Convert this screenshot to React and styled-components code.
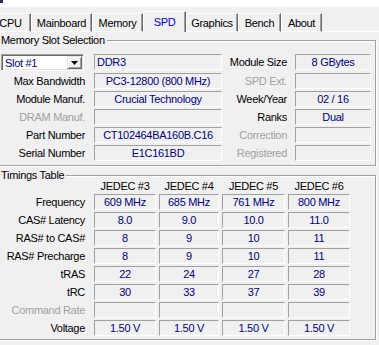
import React from 'react';
import styled, { createGlobalStyle } from 'styled-components';

const GlobalStyle = createGlobalStyle`
  html, body { margin: 0; padding: 0; background: #f0f0f0; }
  body { font-family: "Liberation Sans", Arial, sans-serif; }
`;

const Window = styled.div`
  width: 379px;
  height: 345px;
  overflow: hidden;
  background: #f0f0f0;
  font-family: "Liberation Sans", Arial, sans-serif;
  font-size: 11px;
  letter-spacing: -0.3px;
  color: #000;
  display: flex;
  flex-direction: column;
`;

const TitleEdge = styled.div`
  height: 7px;
  flex-shrink: 0;
  background: #fff;
  display: flex;
`;

const TitleMark = styled.span`
  width: 3px;
  height: 3px;
  background: #3b1f5e;
`;

const TabBar = styled.div`
  display: flex;
  align-items: flex-end;
  height: 25px;
  flex-shrink: 0;
  margin-left: -10px;
`;

const Tab = styled.div`
  box-sizing: border-box;
  flex-shrink: 0;
  width: ${(p) => p.$w}px;
  height: ${(p) => (p.$active ? 21 : 19)}px;
  display: flex;
  align-items: center;
  justify-content: center;
  border-top: 1px solid #fff;
  border-left: 1px solid #fff;
  border-right: 1px solid #696969;
  border-bottom: ${(p) => (p.$active ? 'none' : '1px solid #fff')};
  box-shadow: inset -1px 0 0 #a0a0a0;
  color: ${(p) => (p.$active ? '#0000ff' : '#000')};
  white-space: nowrap;
`;

const TabFiller = styled.div`
  flex: 1;
  height: 1px;
  background: #fff;
`;

const Panel = styled.div`
  display: flex;
  flex-direction: column;
  margin-left: -6px;
  width: 382px;
`;

const GroupBox = styled.fieldset`
  box-sizing: border-box;
  width: 382px;
  min-width: 0;
  margin: ${(p) => p.$mt}px 0 0 0;
  padding: ${(p) => p.$pt}px 3px ${(p) => p.$pb}px 6px;
  border: 1px solid #a0a0a0;
  box-shadow: inset 1px 1px 0 #fff, 1px 1px 0 #fff;
`;

const Legend = styled.legend`
  padding: 0 2px;
  margin-left: -2px;
  line-height: 13px;
  background: #f0f0f0;
  white-space: nowrap;
`;

const SlotGrid = styled.div`
  display: grid;
  grid-template-columns: 93px 128px 73px 76px;
  grid-template-rows: 19px repeat(5, 18px);
`;

const TimingGrid = styled.div`
  display: grid;
  margin-top: -3px;
  grid-template-columns: 90px 62px 60px 63px 62px;
  grid-template-rows: 14px repeat(8, 18px);
  column-gap: 3px;
`;

const Label = styled.div`
  text-align: right;
  padding-right: ${(p) => p.$pr}px;
  line-height: ${(p) => p.$lh || 18}px;
  color: ${(p) => (p.$disabled ? '#a0a0a0' : '#000')};
  white-space: nowrap;
`;

const Header = styled.div`
  text-align: center;
  line-height: 14px;
  white-space: nowrap;
`;

const Field = styled.div`
  box-sizing: border-box;
  height: 16px;
  margin-top: 1px;
  border-top: 1px solid #a0a0a0;
  border-left: 1px solid #a0a0a0;
  border-bottom: 1px solid #fff;
  border-right: 1px solid #fff;
  line-height: 14px;
  color: #000080;
  text-align: ${(p) => (p.$left ? 'left' : 'center')};
  padding-left: ${(p) => (p.$left ? 2 : 0)}px;
  white-space: nowrap;
  overflow: hidden;
`;

const Combo = styled.div`
  box-sizing: border-box;
  width: 83px;
  height: 17px;
  margin-top: 1px;
  display: flex;
  background: #fff;
  border: 1px solid;
  border-color: #a0a0a0 #fff #fff #a0a0a0;
  box-shadow: inset 1px 1px 0 #696969, inset -1px -1px 0 #e3e3e3;
`;

const ComboText = styled.span`
  flex: 1;
  padding-left: 3px;
  padding-top: 1px;
  line-height: 14px;
  color: #000080;
  white-space: nowrap;
`;

const ComboButton = styled.span`
  box-sizing: border-box;
  width: 15px;
  margin: 1px 1px 1px 0;
  display: flex;
  align-items: center;
  justify-content: center;
  background: #f0f0f0;
  border: 1px solid;
  border-color: #e3e3e3 #696969 #696969 #e3e3e3;
  box-shadow: inset 1px 1px 0 #fff, inset -1px -1px 0 #a0a0a0;
`;

const tabs = [
  { name: 'CPU', w: 41 },
  { name: 'Mainboard', w: 61 },
  { name: 'Memory', w: 51 },
  { name: 'SPD', w: 43, active: true },
  { name: 'Graphics', w: 52 },
  { name: 'Bench', w: 43 },
  { name: 'About', w: 41 },
];

const slotRows = [
  { l: 'Max Bandwidth', v: 'PC3-12800 (800 MHz)', rl: 'SPD Ext.', rd: true, rv: '' },
  { l: 'Module Manuf.', v: 'Crucial Technology', rl: 'Week/Year', rv: '02 / 16' },
  { l: 'DRAM Manuf.', d: true, v: '', rl: 'Ranks', rv: 'Dual' },
  { l: 'Part Number', v: 'CT102464BA160B.C16', rl: 'Correction', rd: true, rv: '' },
  { l: 'Serial Number', v: 'E1C161BD', rl: 'Registered', rd: true, rv: '' },
];

const timingRows = [
  { l: 'Frequency', v: ['609 MHz', '685 MHz', '761 MHz', '800 MHz'] },
  { l: 'CAS# Latency', v: ['8.0', '9.0', '10.0', '11.0'] },
  { l: 'RAS# to CAS#', v: ['8', '9', '10', '11'] },
  { l: 'RAS# Precharge', v: ['8', '9', '10', '11'] },
  { l: 'tRAS', v: ['22', '24', '27', '28'] },
  { l: 'tRC', v: ['30', '33', '37', '39'] },
  { l: 'Command Rate', d: true, v: ['', '', '', ''] },
  { l: 'Voltage', v: ['1.50 V', '1.50 V', '1.50 V', '1.50 V'] },
];

const Arrow = () => (
  <svg width="7" height="4" viewBox="0 0 7 4">
    <path d="M0 0H7L3.5 4Z" fill="#000" />
  </svg>
);

export default function App() {
  return (
    <>
      <GlobalStyle />
      <Window>
        <TitleEdge>
          <TitleMark />
        </TitleEdge>
        <TabBar>
          {tabs.map((t) => (
            <Tab key={t.name} $w={t.w} $active={t.active}>
              {t.name}
            </Tab>
          ))}
          <TabFiller />
        </TabBar>
        <Panel>
          <GroupBox $mt={2} $pt={6} $pb={3}>
            <Legend>Memory Slot Selection</Legend>
            <SlotGrid>
              <Combo>
                <ComboText>Slot #1</ComboText>
                <ComboButton>
                  <Arrow />
                </ComboButton>
              </Combo>
              <Field $left>DDR3</Field>
              <Label $pr={8} $lh={19}>Module Size</Label>
              <Field>8 GBytes</Field>
              {slotRows.map((r) => (
                <React.Fragment key={r.l}>
                  <Label $pr={9} $disabled={r.d}>{r.l}</Label>
                  <Field>{r.v}</Field>
                  <Label $pr={8} $disabled={r.rd}>{r.rl}</Label>
                  <Field>{r.rv}</Field>
                </React.Fragment>
              ))}
            </SlotGrid>
          </GroupBox>
          <GroupBox $mt={3} $pt={0} $pb={2}>
            <Legend>Timings Table</Legend>
            <TimingGrid>
              <span />
              {['JEDEC #3', 'JEDEC #4', 'JEDEC #5', 'JEDEC #6'].map((h) => (
                <Header key={h}>{h}</Header>
              ))}
              {timingRows.map((r) => (
                <React.Fragment key={r.l}>
                  <Label $pr={6} $disabled={r.d}>{r.l}</Label>
                  {r.v.map((v, i) => (
                    <Field key={i}>{v}</Field>
                  ))}
                </React.Fragment>
              ))}
            </TimingGrid>
          </GroupBox>
        </Panel>
      </Window>
    </>
  );
}
